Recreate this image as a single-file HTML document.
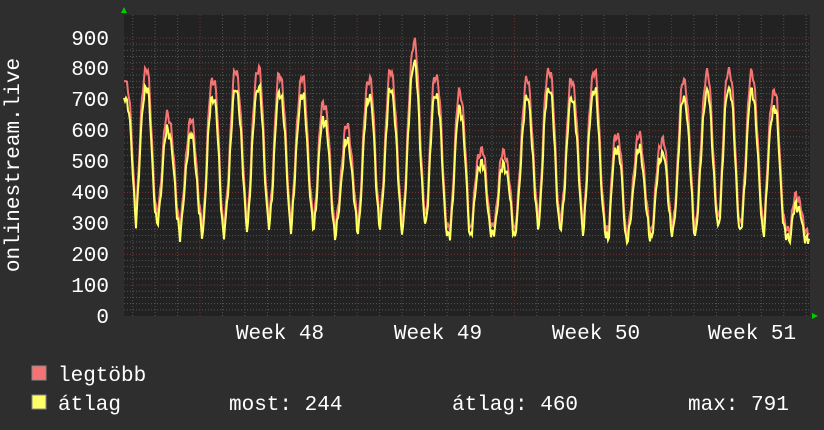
<!DOCTYPE html>
<html><head><meta charset="utf-8"><style>
body{margin:0;background:#2e2e2e;width:824px;height:430px;overflow:hidden;font-family:"Liberation Mono",monospace;color:#fff}
svg{position:absolute;left:0;top:0}
</style></head><body>
<svg id="g" width="824" height="430" xmlns="http://www.w3.org/2000/svg" font-family="Liberation Mono, monospace" fill="#fff">
<rect x="124" y="15" width="686" height="301" fill="#222"/>
<g id="grid"></g>
<g font-size="21" text-anchor="end">
<text x="109" y="323">0</text><text x="109" y="292">100</text><text x="109" y="261">200</text><text x="109" y="230">300</text><text x="109" y="199">400</text><text x="109" y="168">500</text><text x="109" y="137">600</text><text x="109" y="106">700</text><text x="109" y="75">800</text><text x="109" y="45">900</text>
</g>
<g font-size="21" text-anchor="middle">
<text x="280" y="339">Week 48</text><text x="438" y="339">Week 49</text><text x="596" y="339">Week 50</text><text x="752" y="339">Week 51</text>
</g>
<text font-size="21" text-anchor="middle" transform="translate(19,165) rotate(-90)">onlinestream.live</text>
<path id="mx" fill="none" stroke="#f47474" stroke-width="2"/>
<path id="av" fill="none" stroke="#ffff66" stroke-width="2"/>
<polygon points="121,13 127,13 124,7" fill="#0c0"/>
<polygon points="812,313 812,319 818,316" fill="#0c0"/>
<rect x="32" y="366" width="14" height="14" fill="#f47474" stroke="#888"/>
<rect x="32" y="395" width="14" height="14" fill="#ffff66" stroke="#888"/>
<g font-size="21">
<text x="58" y="381">legtöbb</text>
<text x="58" y="410">átlag</text>
<text x="229" y="410">most: 244</text>
<text x="452" y="410">átlag: 460</text>
<text x="688" y="410">max: 791</text>
</g>
</svg>
<script>
var g=document.getElementById('grid'),h='';
for(var v=20;v<=900;v+=20){var y=316-v*0.3089;var maj=v%100==0;h+='<line x1="124" x2="810" y1="'+y+'" y2="'+y+'" stroke="'+(maj?'#7a2f2f':'#555')+'" stroke-dasharray="1,2"/>';}
for(var i=0;i<32;i++){var x=132.7+i*22.45;if(x>810)break;var maj=(i%7==3);h+='<line y1="15" y2="316" x1="'+x+'" x2="'+x+'" stroke="'+(maj?'#7a2f2f':'#555')+'" stroke-dasharray="1,2"/>';}
g.innerHTML=h;
var pk=[[126,760],[146,800],[168,650],[191,630],[213,770],[236,790],[258,800],[280,780],[302,770],[324,690],[347,610],[369,770],[391,790],[414,880],[436,780],[460,720],[481,540],[504,530],[527,760],[549,800],[572,760],[594,790],[617,590],[639,580],[662,570],[684,760],[707,780],[729,800],[752,780],[774,730],[797,390]];
var tr=[280,270,290,260,240,280,270,270,280,260,270,270,270,280,260,210,260,260,280,270,270,260,180,250,250,250,270,260,260,250,180];
function val(x){
 var best=0;for(var i=0;i<pk.length;i++){var d=Math.abs(x-pk[i][0])/6.2;var t=tr[i];var e=Math.exp(-Math.pow(d,2.5)/1.6);var w=t+(pk[i][1]-t)*e;
 var dd=Math.abs(x-pk[i][0]);if(dd<11.3||best==0)best=Math.max(best,w);}
 var n=Math.sin(x*1.7)*15+Math.sin(x*0.73)*10;return best+n;}
var a='',b='';
for(var x=124;x<=809;x++){var v=val(x);if(x<=125)v=760;var y1=316-v*0.3089,y2=316-(v*0.93-5+Math.sin(x*2.3)*6)*0.3089;
a+=(x==124?'M':'L')+x+' '+y1.toFixed(1);b+=(x==124?'M':'L')+x+' '+y2.toFixed(1);}
document.getElementById('mx').setAttribute('d',a);document.getElementById('av').setAttribute('d',b);
</script>
</body></html>
